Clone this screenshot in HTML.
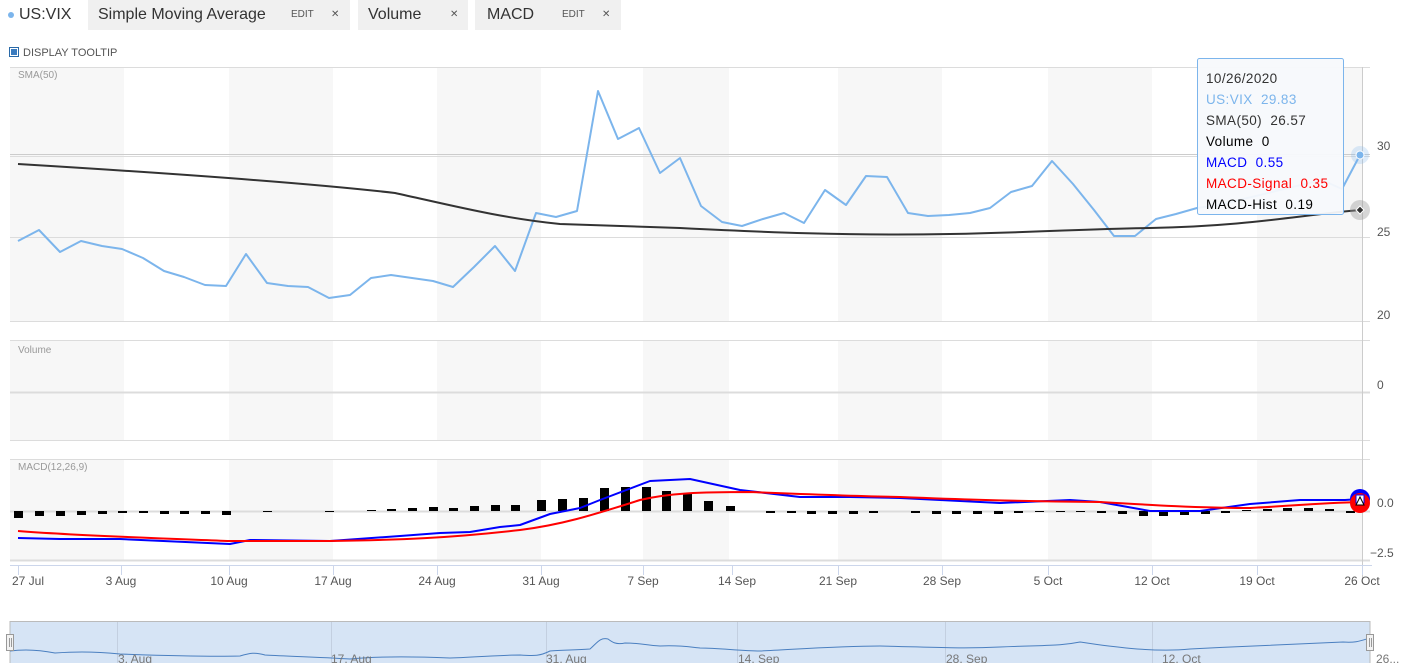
<!DOCTYPE html>
<html><head><meta charset="utf-8"><style>
body{margin:0;width:1410px;height:663px;overflow:hidden;background:#fff;font-family:"Liberation Sans",sans-serif;}
.tab{position:absolute;top:0;height:30px;background:#f0f0f0;font-size:16px;color:#333;line-height:30px;}
.sm{font-size:10px;color:#555;position:absolute;top:0}
svg text{white-space:pre}
</style></head><body>
<div style="position:absolute;left:8px;top:0;height:30px;line-height:30px;font-size:16px;color:#333"><span style="display:inline-block;width:6px;height:6px;border-radius:3px;background:#7cb5ec;vertical-align:middle;margin-right:5px"></span>US:VIX</div>
<div class="tab" style="left:88px;width:262px"><span style="margin-left:10px">Simple Moving Average</span><span class="sm" style="left:203px">EDIT</span><span class="sm" style="left:243px">✕</span></div>
<div class="tab" style="left:358px;width:110px"><span style="margin-left:10px">Volume</span><span class="sm" style="left:92px">✕</span></div>
<div class="tab" style="left:475px;width:146px"><span style="margin-left:12px">MACD</span><span class="sm" style="left:87px">EDIT</span><span class="sm" style="left:127px">✕</span></div>
<div style="position:absolute;left:9px;top:47px;font-size:11px;color:#555;line-height:12px"><span style="display:inline-block;width:8px;height:8px;border:1px solid #2a6aa8;background:#3a7bbf;box-shadow:inset 0 0 0 1px #fff;vertical-align:-1px;margin-right:4px"></span>DISPLAY TOOLTIP</div>
<svg width="1410" height="663" style="position:absolute;left:0;top:0" font-family="Liberation Sans, sans-serif">
<g fill="#f7f7f7">
<rect x="10" y="67" width="114" height="255"/><rect x="229" y="67" width="104" height="255"/><rect x="437" y="67" width="104" height="255"/><rect x="643" y="67" width="86" height="255"/><rect x="838" y="67" width="104" height="255"/><rect x="1048" y="67" width="104" height="255"/><rect x="1257" y="67" width="105" height="255"/>
<rect x="10" y="341" width="114" height="99"/><rect x="229" y="341" width="104" height="99"/><rect x="437" y="341" width="104" height="99"/><rect x="643" y="341" width="86" height="99"/><rect x="838" y="341" width="104" height="99"/><rect x="1048" y="341" width="104" height="99"/><rect x="1257" y="341" width="105" height="99"/>
<rect x="10" y="459" width="114" height="101"/><rect x="229" y="459" width="104" height="101"/><rect x="437" y="459" width="104" height="101"/><rect x="643" y="459" width="86" height="101"/><rect x="838" y="459" width="104" height="101"/><rect x="1048" y="459" width="104" height="101"/><rect x="1257" y="459" width="105" height="101"/>
</g>
<g stroke="#dcdcdc" stroke-width="1">
<line x1="10" y1="67.5" x2="1370" y2="67.5"/><line x1="10" y1="154.5" x2="1370" y2="154.5" stroke="#ccc"/><line x1="10" y1="156.5" x2="1370" y2="156.5"/><line x1="10" y1="237.5" x2="1370" y2="237.5"/><line x1="10" y1="321.5" x2="1370" y2="321.5"/>
<line x1="10" y1="340.5" x2="1370" y2="340.5"/><line x1="10" y1="392.5" x2="1370" y2="392.5" stroke-width="2"/><line x1="10" y1="440.5" x2="1370" y2="440.5"/>
<line x1="10" y1="459.5" x2="1370" y2="459.5"/><line x1="10" y1="511.5" x2="1370" y2="511.5" stroke-width="2"/><line x1="10" y1="560.5" x2="1370" y2="560.5" stroke-width="2"/>
</g>
<line x1="1362.5" y1="67" x2="1362.5" y2="580" stroke="#ccc"/>
<line x1="10" y1="565.5" x2="1372" y2="565.5" stroke="#ccd6eb"/>
<g stroke="#ccd6eb"><line x1="18.5" y1="565" x2="18.5" y2="575"/><line x1="121.5" y1="565" x2="121.5" y2="575"/><line x1="229.5" y1="565" x2="229.5" y2="575"/><line x1="333.5" y1="565" x2="333.5" y2="575"/><line x1="437.5" y1="565" x2="437.5" y2="575"/><line x1="541.5" y1="565" x2="541.5" y2="575"/><line x1="643.5" y1="565" x2="643.5" y2="575"/><line x1="732.5" y1="565" x2="732.5" y2="575"/><line x1="838.5" y1="565" x2="838.5" y2="575"/><line x1="942.5" y1="565" x2="942.5" y2="575"/><line x1="1048.5" y1="565" x2="1048.5" y2="575"/><line x1="1152.5" y1="565" x2="1152.5" y2="575"/><line x1="1257.5" y1="565" x2="1257.5" y2="575"/><line x1="1362.5" y1="565" x2="1362.5" y2="575"/></g>
<g font-size="12" fill="#555" text-anchor="middle">
<text x="28" y="585">27 Jul</text><text x="121" y="585">3 Aug</text><text x="229" y="585">10 Aug</text><text x="333" y="585">17 Aug</text><text x="437" y="585">24 Aug</text><text x="541" y="585">31 Aug</text><text x="643" y="585">7 Sep</text><text x="737" y="585">14 Sep</text><text x="838" y="585">21 Sep</text><text x="942" y="585">28 Sep</text><text x="1048" y="585">5 Oct</text><text x="1152" y="585">12 Oct</text><text x="1257" y="585">19 Oct</text><text x="1362" y="585">26 Oct</text>
</g>
<g font-size="12" fill="#555"><text x="1377" y="150">30</text><text x="1377" y="236">25</text><text x="1377" y="319">20</text><text x="1377" y="389">0</text><text x="1377" y="507">0.0</text><text x="1370" y="557">−2.5</text></g>
<g font-size="10" fill="#999"><text x="18" y="78">SMA(50)</text><text x="18" y="353">Volume</text><text x="18" y="470">MACD(12,26,9)</text></g>
<polyline fill="none" stroke="#7cb5ec" stroke-width="2" stroke-linejoin="round" points="18,241 39,230 60,252 81,241 102,246 122,249 143,258 164,271 184,277 205,285 226,286 246,254 267,283 288,286 308,287 329,298 350,295 371,278 391,275 412,278 433,281 453,287 474,267 495,246 515,271 536,213 556,217 577,211 598,91 618,139 639,128 660,173 680,158 701,206 722,222 742,226 763,219 784,213 804,223 825,190 846,205 866,176 887,177 908,213 928,216 949,215 970,213 990,208 1011,192 1032,186 1052,161 1073,184 1094,210 1114,236 1135,236 1156,219 1176,214 1197,208 1218,205 1239,200 1260,195 1280,190 1301,185 1322,180 1342,189 1360,155"/>
<path fill="none" stroke="#333" stroke-width="2" d="M18,164 C150,172 300,182 395,193 C450,205 500,218 560,224 L680,228 C760,232 850,236 950,234 C1050,232 1080,229 1150,228 C1250,226 1300,215 1360,210"/>
<circle cx="1360" cy="155" r="9" fill="#7cb5ec" opacity="0.25"/><circle cx="1360" cy="155" r="4" fill="#7cb5ec" stroke="#fff"/>
<circle cx="1360" cy="210" r="10" fill="#999" opacity="0.4"/><path d="M1360,206 l4,4 -4,4 -4,-4z" fill="#333" stroke="#fff"/>
<g fill="#000">
<rect x="14" y="511" width="9" height="7"/><rect x="35" y="511" width="9" height="5"/><rect x="56" y="511" width="9" height="5"/><rect x="77" y="511" width="9" height="4"/><rect x="98" y="511" width="9" height="3"/><rect x="118" y="511" width="9" height="2"/><rect x="139" y="511" width="9" height="2"/><rect x="160" y="511" width="9" height="3"/><rect x="180" y="511" width="9" height="3"/><rect x="201" y="511" width="9" height="3"/><rect x="222" y="511" width="9" height="4"/><rect x="263" y="511" width="9" height="1"/><rect x="325" y="511" width="9" height="1"/>
<rect x="367" y="510" width="9" height="1"/><rect x="387" y="509" width="9" height="2"/><rect x="408" y="508" width="9" height="3"/><rect x="429" y="507" width="9" height="4"/><rect x="449" y="508" width="9" height="3"/><rect x="470" y="506" width="9" height="5"/><rect x="491" y="505" width="9" height="6"/><rect x="511" y="505" width="9" height="6"/><rect x="537" y="500" width="9" height="11"/><rect x="558" y="499" width="9" height="12"/><rect x="579" y="498" width="9" height="13"/><rect x="600" y="488" width="9" height="23"/><rect x="621" y="487" width="9" height="24"/><rect x="642" y="487" width="9" height="24"/><rect x="662" y="491" width="9" height="20"/><rect x="683" y="494" width="9" height="17"/><rect x="704" y="501" width="9" height="10"/><rect x="726" y="506" width="9" height="5"/>
<rect x="766" y="511" width="9" height="2"/><rect x="787" y="511" width="9" height="2"/><rect x="807" y="511" width="9" height="3"/><rect x="828" y="511" width="9" height="3"/><rect x="849" y="511" width="9" height="3"/><rect x="869" y="511" width="9" height="2"/><rect x="911" y="511" width="9" height="2"/><rect x="932" y="511" width="9" height="3"/><rect x="952" y="511" width="9" height="3"/><rect x="973" y="511" width="9" height="3"/><rect x="994" y="511" width="9" height="3"/><rect x="1014" y="511" width="9" height="2"/><rect x="1035" y="511" width="9" height="1"/><rect x="1056" y="511" width="9" height="1"/><rect x="1076" y="511" width="9" height="1"/><rect x="1097" y="511" width="9" height="2"/><rect x="1118" y="511" width="9" height="3"/><rect x="1139" y="511" width="9" height="5"/><rect x="1159" y="511" width="9" height="5"/><rect x="1180" y="511" width="9" height="4"/><rect x="1201" y="511" width="9" height="3"/><rect x="1221" y="511" width="9" height="2"/><rect x="1242" y="510" width="9" height="1"/><rect x="1263" y="509" width="9" height="2"/><rect x="1283" y="508" width="9" height="3"/><rect x="1304" y="508" width="9" height="3"/><rect x="1325" y="509" width="9" height="2"/><rect x="1346" y="511" width="9" height="2"/>
</g>
<polyline fill="none" stroke="#0000ff" stroke-width="2" stroke-linejoin="round" points="18,538 60,539 120,539 230,544 250,540 330,541 400,536 440,533 470,532 500,527 520,525 550,514 580,508 600,500 650,481 690,479 740,490 800,497 850,497 900,498 1000,503 1070,500 1100,502 1150,511 1200,511 1250,504 1300,500 1345,500 1360,499"/>
<path fill="none" stroke="#ff0000" stroke-width="2" d="M18,531 C80,536 180,539 230,541 L330,541 C400,540 450,538 520,530 C560,525 590,516 640,500 C670,493 700,492 750,492 C800,494 850,496 900,497 C950,499 1000,501 1100,502 C1150,505 1200,508 1250,508 C1290,506 1320,503 1360,502"/>
<circle cx="1360" cy="499" r="10" fill="#0000ff"/><circle cx="1360" cy="503" r="10" fill="#ff0000"/><rect x="1356" y="495" width="8" height="8" fill="#fff" stroke="#0000ff"/><path d="M1360,497 l4,8 -8,0z" fill="#fff" stroke="#000" stroke-width="1"/>
<rect x="10" y="621.5" width="1360" height="45" fill="#d6e4f5" stroke="#bbb"/>
<g stroke="#c3cfe0"><line x1="117.5" y1="622" x2="117.5" y2="663"/><line x1="331.5" y1="622" x2="331.5" y2="663"/><line x1="546.5" y1="622" x2="546.5" y2="663"/><line x1="737.5" y1="622" x2="737.5" y2="663"/><line x1="945.5" y1="622" x2="945.5" y2="663"/><line x1="1152.5" y1="622" x2="1152.5" y2="663"/></g>
<path fill="none" stroke="#4a7fc0" stroke-width="1" d="M10,651 C25,649 40,650 55,653 C70,652 90,651 120,654 C150,655 200,657 240,656 C250,653 255,652 265,655 C280,656 320,657 350,659 C370,657 400,656 450,658 C480,657 500,655 520,655 C535,656 540,656 550,651 C560,650 575,650 590,649 C597,643 600,637 608,639 C612,642 616,645 625,643 C640,643 645,645 660,646 C680,645 690,647 700,648 C720,648 740,651 760,651 C800,649 840,646 880,646 C930,647 960,649 1000,647 C1050,645 1060,646 1080,642 C1100,645 1150,653 1190,649 C1250,646 1320,643 1343,642 C1355,643 1360,641 1370,638"/>
<g font-size="12" fill="#777"><text x="118" y="663">3. Aug</text><text x="331" y="663">17. Aug</text><text x="546" y="663">31. Aug</text><text x="738" y="663">14. Sep</text><text x="946" y="663">28. Sep</text><text x="1162" y="663">12. Oct</text><text x="1376" y="663">26...</text></g>
<rect x="6.5" y="634.5" width="7" height="16" fill="#f2f2f2" stroke="#999"/><line x1="9.5" y1="638" x2="9.5" y2="647" stroke="#999"/><line x1="11.5" y1="638" x2="11.5" y2="647" stroke="#999"/>
<rect x="1366.5" y="634.5" width="7" height="16" fill="#f2f2f2" stroke="#999"/><line x1="1369.5" y1="638" x2="1369.5" y2="647" stroke="#999"/><line x1="1371.5" y1="638" x2="1371.5" y2="647" stroke="#999"/>
<rect x="1197.5" y="58.5" width="146" height="156" fill="#f7f9fc" fill-opacity="0.95" stroke="#7cb5ec" rx="2"/>
<g font-size="13.5" letter-spacing="0.4"><text x="1206" y="83" fill="#333">10/26/2020</text><text x="1206" y="104" fill="#7cb5ec">US:VIX  29.83</text><text x="1206" y="125" fill="#333">SMA(50)  26.57</text><text x="1206" y="146" fill="#000">Volume  0</text><text x="1206" y="167" fill="#0000ff">MACD  0.55</text><text x="1206" y="188" fill="#ff0000">MACD-Signal  0.35</text><text x="1206" y="209" fill="#000">MACD-Hist  0.19</text></g>
</svg>
</body></html>
